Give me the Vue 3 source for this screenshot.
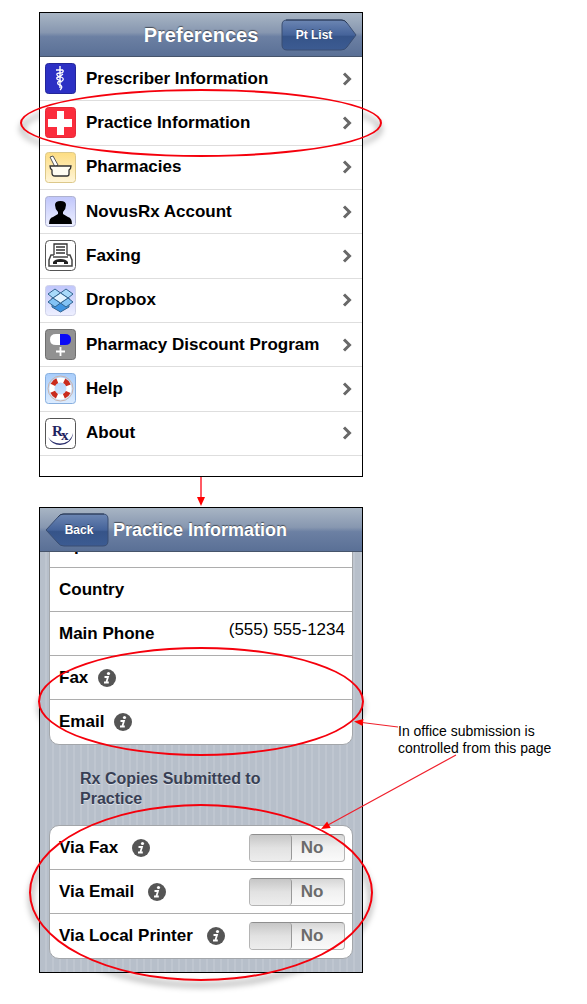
<script setup>
import { ref } from "vue";

const menu = [
  { icon: "prescriber", label: "Prescriber Information" },
  { icon: "practice", label: "Practice Information" },
  { icon: "pharmacy", label: "Pharmacies" },
  { icon: "account", label: "NovusRx Account" },
  { icon: "fax", label: "Faxing" },
  { icon: "dropbox", label: "Dropbox" },
  { icon: "discount", label: "Pharmacy Discount Program" },
  { icon: "help", label: "Help" },
  { icon: "about", label: "About" },
];

const fields = [
  { label: "Zip" },
  { label: "Country" },
  { label: "Main Phone", value: "(555) 555-1234" },
  { label: "Fax", info: true },
  { label: "Email", info: true },
];

const copies = ref([
  { id: "via-fax", label: "Via Fax", on: false },
  { id: "via-email", label: "Via Email", on: false },
  { id: "via-printer", label: "Via Local Printer", on: false },
]);
</script>

<template>
  <main class="figure">
    <!-- Preferences -->
    <section class="step">
      <div class="ring-shadow ring-menu"></div>
      <div class="phone">
        <header class="bar bar-center">
          <h1>Preferences</h1>
          <button type="button" class="nav-btn next">
            <svg viewBox="0 0 76 32" width="76" height="32">
              <defs>
                <linearGradient id="nextFill" x1="0" y1="0" x2="0" y2="1">
                  <stop offset="0" stop-color="#6c86b3" />
                  <stop offset="0.5" stop-color="#45639a" />
                  <stop offset="0.55" stop-color="#365489" />
                  <stop offset="1" stop-color="#3c5b92" />
                </linearGradient>
              </defs>
              <path d="M6 1H60Q64 1 66 4L75 16L66 28Q64 31 60 31H6Q1 31 1 26V6Q1 1 6 1Z" fill="url(#nextFill)" stroke="#3a4e72" />
              <path d="M5 1H61Q64 1 66 4" fill="none" stroke="#2c3c58" />
            </svg>
            <span>Pt List</span>
          </button>
        </header>
        <nav class="menu">
          <a v-for="item in menu" :key="item.icon" href="#" class="menu-row">
            <svg class="icon" viewBox="0 0 31 31" width="31" height="31">
              <g v-if="item.icon == 'prescriber'">
                <rect x="0.5" y="0.5" width="30" height="30" rx="3" fill="#2c30c4" stroke="#23269a" />
                <path d="M15 3V25" stroke="#fff" stroke-width="1.4" />
                <path d="M11 7H18M18 7Q19 10 15 10Q11 10 12 12Q13 14 16 14Q19 15 18 17Q17 19 14 18.5Q12 19 13 21Q14 22 16 22.500Q18 24 15 27M18 11L14 14Q11 14 12 16L17 19" fill="none" stroke="#fff" stroke-width="1.3" />
              </g>
              <g v-else-if="item.icon == 'practice'">
                <rect x="0.5" y="0.5" width="30" height="30" rx="3" fill="#fb2c3c" stroke="#e42a38" />
                <path d="M12 4H19V12H27V20H19V28H12V20H3V12H12Z" fill="#fff" />
              </g>
              <g v-else-if="item.icon == 'pharmacy'">
                <defs>
                  <linearGradient id="sand" x1="0" y1="0" x2="0" y2="1">
                    <stop offset="0" stop-color="#fddd82" />
                    <stop offset="1" stop-color="#fff6da" />
                  </linearGradient>
                </defs>
                <rect x="0.5" y="0.5" width="30" height="30" rx="3" fill="url(#sand)" stroke="#dcc88a" />
                <path d="M5 5L8 4L13 13L10 15Z" fill="#fff" stroke="#555" />
                <path d="M5 14H26Q26 17 24 18V22Q24 24 22 24H10Q7 24 7 21V18Q5 17 5 14Z" fill="#fffdf2" stroke="#333" stroke-width="1.3" />
              </g>
              <g v-else-if="item.icon == 'account'">
                <defs>
                  <linearGradient id="lilac" x1="0" y1="0" x2="0" y2="1">
                    <stop offset="0" stop-color="#c0c6fb" />
                    <stop offset="1" stop-color="#eef0ff" />
                  </linearGradient>
                </defs>
                <rect x="0.5" y="0.5" width="30" height="30" rx="3" fill="url(#lilac)" stroke="#aeb2cf" />
                <path d="M4 28Q4 22 8 21L13 18V16Q10 13 10 9Q10 5 15.5 5Q21 5 21 9Q21 13 18 16V18L23 21Q27 22 27 28Z" fill="#000" />
              </g>
              <g v-else-if="item.icon == 'fax'">
                <rect x="0.5" y="0.5" width="30" height="30" rx="4" fill="#fff" stroke="#555" />
                <path d="M9 15V4H22V15M11 7H20M11 10H20M11 13H20" fill="none" stroke="#333" stroke-width="1.3" />
                <path d="M9 15H6L4 20V26H27V20L25 15H22M8 17H23" fill="none" stroke="#444" stroke-width="1.5" />
                <path d="M8 24V22Q10 19 15.5 19Q21 19 23 22V24H19V22H12V24Z" fill="#222" />
              </g>
              <g v-else-if="item.icon == 'dropbox'">
                <rect x="0.5" y="0.5" width="30" height="30" rx="3" fill="url(#lilac)" stroke="#d0d3e8" />
                <g stroke="#33648f" stroke-linejoin="round">
                  <path d="M7 13L15.5 8L24 13V22L15.5 27L7 22Z" fill="#3f94e2" />
                  <path d="M10 4L15.5 8L8 13L3 9Z" fill="#a9dafa" />
                  <path d="M21 4L15.5 8L23 13L28 9Z" fill="#a9dafa" />
                  <path d="M8 13L15.5 18L10 22L3 17Z" fill="#83c3f5" />
                  <path d="M23 13L15.5 18L21 22L28 17Z" fill="#83c3f5" />
                  <path d="M15.5 8L23 13L15.5 18L8 13Z" fill="#e2f3ff" />
                </g>
              </g>
              <g v-else-if="item.icon == 'discount'">
                <rect x="0.5" y="0.5" width="30" height="30" rx="3" fill="#919191" stroke="#6e6e6e" />
                <path d="M15 5H11Q5 5 5 10.5Q5 16 11 16H15Z" fill="#fff" />
                <path d="M15 5H20Q26 5 26 10.5Q26 16 20 16H15Z" fill="#0a0af5" />
                <path d="M15.5 18V27M11 22.5H20" stroke="#fff" stroke-width="1.8" />
              </g>
              <g v-else-if="item.icon == 'help'">
                <defs>
                  <linearGradient id="sky" x1="0" y1="0" x2="0" y2="1">
                    <stop offset="0" stop-color="#a8cdfb" />
                    <stop offset="1" stop-color="#dcecff" />
                  </linearGradient>
                </defs>
                <rect x="0.5" y="0.5" width="30" height="30" rx="3" fill="url(#sky)" stroke="#86aede" />
                <circle cx="15.5" cy="15.5" r="12.5" fill="none" stroke="#c9b4ac" />
                <circle cx="15.5" cy="15.5" r="8.5" fill="none" stroke="#fff" stroke-width="5" />
                <circle cx="15.5" cy="15.5" r="8.5" fill="none" stroke="#c92b1e" stroke-width="5" stroke-dasharray="6.2 7.15" stroke-dashoffset="-3.6" />
              </g>
              <g v-else>
                <rect x="0.5" y="0.5" width="30" height="30" rx="4" fill="#fff" stroke="#555" />
                <text x="7" y="18" class="rx">R</text>
                <text x="16" y="22" class="rx">x</text>
                <path d="M3 19Q7 27 15 27Q27 26 28 15Q26 25 15 25.5Q7 25 3 19Z" fill="#2a2e6c" />
              </g>
            </svg>
            <span class="menu-label">{{ item.label }}</span>
            <svg class="chevron" viewBox="0 0 10 14" width="10" height="14">
              <path d="M2 1.500L7.500 7L2 12.500" fill="none" stroke="#686868" stroke-width="3" />
            </svg>
          </a>
        </nav>
      </div>
      <div class="ring ring-menu"></div>
    </section>

    <svg class="down" viewBox="0 0 8 30" width="8" height="30">
      <path d="M4 0V22" stroke="#ff5a64" stroke-width="2" />
      <path d="M0 20H8L4 29Z" fill="#f00" />
    </svg>

    <!-- Practice Information -->
    <section class="step detail">
      <div class="ring-shadow ring-contact"></div>
      <div class="ring-shadow ring-copies"></div>
      <div class="phone">
        <header class="bar">
          <button type="button" class="nav-btn back">
            <svg viewBox="0 0 64 34" width="64" height="34">
              <path d="M58 1H19Q15 1 13 4L1 17L13 30Q15 33 19 33H58Q63 33 63 28V6Q63 1 58 1Z" fill="url(#nextFill)" stroke="#3a4e72" />
              <path d="M59 1H18Q15 1 13 4" fill="none" stroke="#2c3c58" />
            </svg>
            <span>Back</span>
          </button>
          <h2>Practice Information</h2>
        </header>
        <div class="form">
          <div class="group fields">
            <div v-for="field in fields" :key="field.label" class="row">
              <span>{{ field.label }}</span>
              <button v-if="field.info" type="button" class="info" :aria-label="field.label + ' info'">
                <svg viewBox="0 0 18 18" width="18" height="18">
                  <circle cx="9" cy="9" r="9" fill="#555" />
                  <circle cx="10.5" cy="4.5" r="1.6" fill="#fff" />
                  <path d="M6.500 8H10L8.300 13.500H10.800M6 13.500H8.300" fill="none" stroke="#fff" stroke-width="1.8" />
                </svg>
              </button>
              <span v-if="field.value" class="value">{{ field.value }}</span>
            </div>
          </div>
          <h3>Rx Copies Submitted to Practice</h3>
          <div class="group copies">
            <div v-for="copy in copies" :key="copy.id" class="row">
              <label :for="copy.id">{{ copy.label }}</label>
              <button type="button" class="info wide" :aria-label="copy.label + ' info'">
                <svg viewBox="0 0 18 18" width="18" height="18">
                  <circle cx="9" cy="9" r="9" fill="#555" />
                  <circle cx="10.5" cy="4.5" r="1.6" fill="#fff" />
                  <path d="M6.500 8H10L8.300 13.500H10.800M6 13.500H8.300" fill="none" stroke="#fff" stroke-width="1.8" />
                </svg>
              </button>
              <label class="switch" :class="{ on: copy.on }">
                <input :id="copy.id" v-model="copy.on" type="checkbox" />
                <span>{{ copy.on ? "Yes" : "No" }}</span>
              </label>
            </div>
          </div>
        </div>
      </div>
      <div class="ring ring-contact"></div>
      <div class="ring ring-copies"></div>
    </section>

    <p class="note">
      In office submission is controlled from this page
      <svg class="pointers" viewBox="0 0 10 10" width="10" height="10">
        <path d="M0 4L-36 -0.500M58 32L-70 102" fill="none" stroke="#f0202c" stroke-width="1.2" />
        <path d="M-44 -1.500L-34.600 -4L-35.400 3Z" fill="#f00" />
        <path d="M-77 106L-67.300 105L-70.900 98.500Z" fill="#f00" />
      </svg>
    </p>
  </main>
</template>

<style>
body {
  margin: 0;
  background: #fff;
}
</style>

<style scoped>
.figure {
  display: grid;
  grid-template-columns: minmax(0, 324px) minmax(0, 160px);
  column-gap: 35px;
  padding: 12px 20px 31px 39px;
  font-family: "Liberation Sans", Arial, Helvetica, sans-serif;
  color: #000;
}

.step {
  grid-column: 1;
  grid-row: 1;
  position: relative;
  isolation: isolate;
}

.step.detail {
  grid-row: 3;
}

.phone {
  position: relative;
  border: 1px solid #000;
  background: #fff;
  overflow: hidden;
}

.bar {
  position: relative;
  z-index: 1;
  display: flex;
  align-items: center;
  gap: 4px;
  box-sizing: border-box;
  height: 44px;
  padding: 0 5px;
  border-bottom: 1px solid #46546b;
  background: linear-gradient(#a8b5c4, #8797b0 45%, #6c80a3 55%, #5a7096);
}

.bar-center {
  display: grid;
  grid-template-columns: 1fr auto 1fr;
}

h1,
h2 {
  margin: 0;
  color: #fff;
  font-size: 18px;
  line-height: 24px;
  text-shadow: 0 -1px 1px rgba(0, 0, 0, 0.5);
  white-space: nowrap;
}

h1 {
  grid-column: 2;
  font-size: 20px;
}

.nav-btn {
  display: grid;
  align-items: center;
  padding: 0;
  border: 0;
  background: none;
  color: #fff;
  font: bold 12px/16px "Liberation Sans", Arial, sans-serif;
  text-shadow: 0 -1px 0 rgba(0, 0, 0, 0.4);
  cursor: pointer;
}

.nav-btn > * {
  grid-area: 1 / 1;
}

.next {
  justify-self: end;
}

.next span {
  padding-right: 10px;
}

.back span {
  padding-left: 4px;
}

.menu {
  display: grid;
  grid-auto-rows: 1fr;
  height: 399px;
  margin-bottom: 20px;
}

.menu-row {
  display: flex;
  align-items: center;
  gap: 10px;
  padding: 0 10px 0 5px;
  border-bottom: 1px solid #dedede;
  color: #000;
  font-size: 17px;
  font-weight: bold;
  line-height: 20px;
  text-decoration: none;
}

.menu-label {
  flex: 1;
}

.rx {
  fill: #1f2360;
  font: bold 15px "Liberation Serif", serif;
}

.down {
  grid-column: 1;
  grid-row: 2;
  justify-self: center;
}

.form {
  padding: 0 9px 13px;
  background: repeating-linear-gradient(90deg, #b7bfca 0 5px, #bfc6d0 5px 7px);
}

.group {
  display: grid;
  grid-auto-rows: 1fr;
  box-sizing: border-box;
  border: 1px solid #a3a6aa;
  border-radius: 10px;
  background: #fff;
  font-size: 17px;
  font-weight: bold;
  line-height: 20px;
}

.fields {
  height: 222px;
  margin-top: -29px;
}

.copies {
  height: 134px;
}

.row {
  display: flex;
  align-items: center;
  padding: 0 7px 0 9px;
  border-bottom: 1px solid #adadad;
}

.row:last-child {
  border-bottom: 0;
}

.value {
  margin-left: auto;
  padding-bottom: 8px;
  font-weight: normal;
}

.info {
  display: flex;
  margin-left: 10px;
  padding: 0;
  border: 0;
  background: none;
  cursor: pointer;
}

.info.wide {
  margin-left: 14px;
}

h3 {
  margin: 0;
  padding: 24px 40px 16px 31px;
  color: #383f54;
  font-size: 16px;
  line-height: 20px;
  text-shadow: 0 1px 0 #dce1e8;
}

.switch {
  display: flex;
  align-items: center;
  box-sizing: border-box;
  width: 96px;
  height: 28px;
  margin-left: auto;
  border: 1px solid #b4b4b4;
  border-top-color: #8e8e8e;
  border-radius: 4px;
  background: linear-gradient(#d6d6d6, #f0f0f0 45%, #fafafa);
  color: #6b6b6b;
  cursor: pointer;
}

.switch input {
  appearance: none;
  box-sizing: border-box;
  width: 42px;
  height: 26px;
  margin: 0;
  border-right: 1px solid #999;
  border-radius: 3px;
  background: linear-gradient(#c6c6c6, #e2e2e2 50%, #ededed);
}

.switch span {
  flex: 1;
  padding-right: 12px;
  text-align: center;
}

.switch.on {
  flex-direction: row-reverse;
}

.ring,
.ring-shadow {
  position: absolute;
  box-sizing: border-box;
  border: 2px solid #f5000c;
  border-radius: 50%;
  pointer-events: none;
}

.ring-shadow {
  border: 4px solid rgba(0, 0, 0, 0.35);
  filter: blur(3px);
  transform: translate(0, 6px);
}

.ring-menu {
  top: 77px;
  left: -19px;
  right: -19px;
  height: 68px;
}

.ring-contact {
  top: 140px;
  left: -1px;
  right: -1px;
  height: 109px;
}

.ring-copies {
  top: 297px;
  left: -10px;
  right: -10px;
  height: 177px;
}

.note {
  position: relative;
  grid-column: 2;
  grid-row: 3;
  align-self: center;
  margin: 0;
  font-size: 14px;
  line-height: 17px;
}

.pointers {
  position: absolute;
  top: 0;
  left: 0;
  overflow: visible;
}
</style>
